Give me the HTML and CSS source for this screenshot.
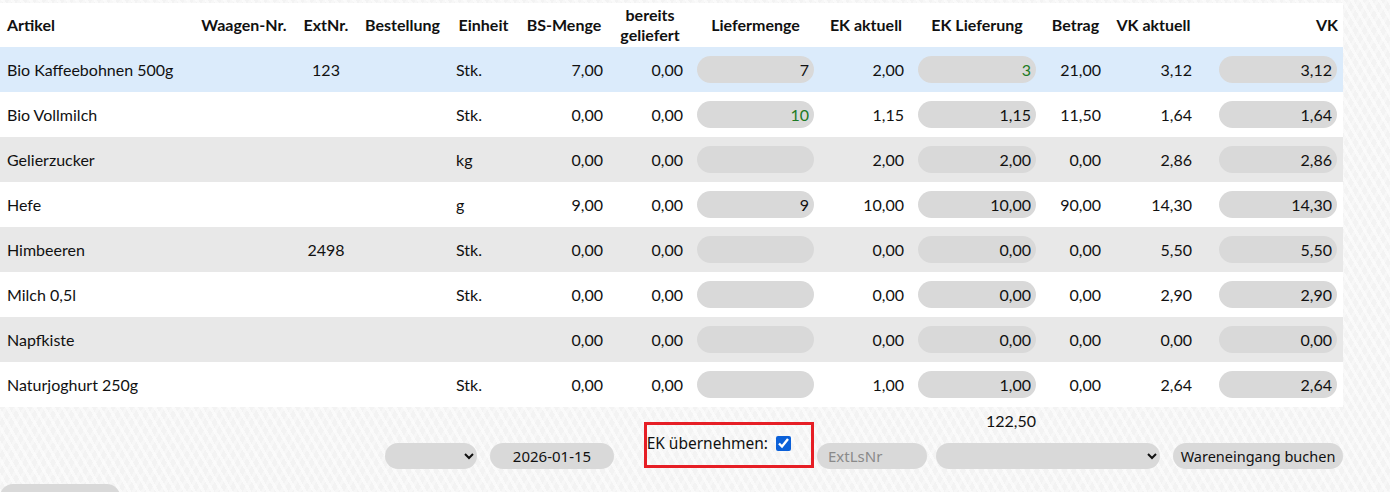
FILE: index.html
```html
<!DOCTYPE html>
<html lang="de">
<head>
<meta charset="utf-8">
<title>Wareneingang</title>
<link rel="stylesheet" href="styles.css">
</head>
<body>
<div class="page">
  <table class="grid">
    <colgroup>
      <col class="c-artikel"><col class="c-waage"><col class="c-ext"><col class="c-best"><col class="c-einh"><col class="c-bs"><col class="c-ber"><col class="c-lief"><col class="c-eka"><col class="c-ekl"><col class="c-betrag"><col class="c-vka"><col class="c-vk">
    </colgroup>
    <thead>
      <tr>
        <th class="left">Artikel</th>
        <th>Waagen-Nr.</th>
        <th>ExtNr.</th>
        <th>Bestellung</th>
        <th>Einheit</th>
        <th>BS-Menge</th>
        <th>bereits<br>geliefert</th>
        <th>Liefermenge</th>
        <th>EK aktuell</th>
        <th>EK Lieferung</th>
        <th>Betrag</th>
        <th>VK aktuell</th>
        <th class="right">VK</th>
      </tr>
    </thead>
    <tbody>
      <tr class="sel">
        <td>Bio Kaffeebohnen 500g</td><td></td><td class="ctr">123</td><td></td><td>Stk.</td>
        <td class="num">7,00</td><td class="num">0,00</td>
        <td class="inp"><input class="pill" value="7"></td>
        <td class="num">2,00</td>
        <td class="inp"><input class="pill green" value="3"></td>
        <td class="num">21,00</td><td class="num">3,12</td>
        <td class="inp vkc"><input class="pill" value="3,12"></td>
      </tr>
      <tr>
        <td>Bio Vollmilch</td><td></td><td></td><td></td><td>Stk.</td>
        <td class="num">0,00</td><td class="num">0,00</td>
        <td class="inp"><input class="pill green" value="10"></td>
        <td class="num">1,15</td>
        <td class="inp"><input class="pill" value="1,15"></td>
        <td class="num">11,50</td><td class="num">1,64</td>
        <td class="inp vkc"><input class="pill" value="1,64"></td>
      </tr>
      <tr class="alt">
        <td>Gelierzucker</td><td></td><td></td><td></td><td>kg</td>
        <td class="num">0,00</td><td class="num">0,00</td>
        <td class="inp"><input class="pill" value=""></td>
        <td class="num">2,00</td>
        <td class="inp"><input class="pill" value="2,00"></td>
        <td class="num">0,00</td><td class="num">2,86</td>
        <td class="inp vkc"><input class="pill" value="2,86"></td>
      </tr>
      <tr>
        <td>Hefe</td><td></td><td></td><td></td><td>g</td>
        <td class="num">9,00</td><td class="num">0,00</td>
        <td class="inp"><input class="pill" value="9"></td>
        <td class="num">10,00</td>
        <td class="inp"><input class="pill" value="10,00"></td>
        <td class="num">90,00</td><td class="num">14,30</td>
        <td class="inp vkc"><input class="pill" value="14,30"></td>
      </tr>
      <tr class="alt">
        <td>Himbeeren</td><td></td><td class="ctr">2498</td><td></td><td>Stk.</td>
        <td class="num">0,00</td><td class="num">0,00</td>
        <td class="inp"><input class="pill" value=""></td>
        <td class="num">0,00</td>
        <td class="inp"><input class="pill" value="0,00"></td>
        <td class="num">0,00</td><td class="num">5,50</td>
        <td class="inp vkc"><input class="pill" value="5,50"></td>
      </tr>
      <tr>
        <td>Milch 0,5l</td><td></td><td></td><td></td><td>Stk.</td>
        <td class="num">0,00</td><td class="num">0,00</td>
        <td class="inp"><input class="pill" value=""></td>
        <td class="num">0,00</td>
        <td class="inp"><input class="pill" value="0,00"></td>
        <td class="num">0,00</td><td class="num">2,90</td>
        <td class="inp vkc"><input class="pill" value="2,90"></td>
      </tr>
      <tr class="alt">
        <td>Napfkiste</td><td></td><td></td><td></td><td></td>
        <td class="num">0,00</td><td class="num">0,00</td>
        <td class="inp"><input class="pill" value=""></td>
        <td class="num">0,00</td>
        <td class="inp"><input class="pill" value="0,00"></td>
        <td class="num">0,00</td><td class="num">0,00</td>
        <td class="inp vkc"><input class="pill" value="0,00"></td>
      </tr>
      <tr>
        <td>Naturjoghurt 250g</td><td></td><td></td><td></td><td>Stk.</td>
        <td class="num">0,00</td><td class="num">0,00</td>
        <td class="inp"><input class="pill" value=""></td>
        <td class="num">1,00</td>
        <td class="inp"><input class="pill" value="1,00"></td>
        <td class="num">0,00</td><td class="num">2,64</td>
        <td class="inp vkc"><input class="pill" value="2,64"></td>
      </tr>
    </tbody>
    <tfoot>
      <tr>
        <td colspan="9"></td>
        <td class="num">122,50</td>
        <td colspan="3"></td>
      </tr>
    </tfoot>
  </table>

  <div class="controls">
    <select class="ctl sel-a"><option></option></select>
    <input class="ctl date" value="2026-01-15">
    <label class="ekbox">EK übernehmen: <input type="checkbox" checked></label>
    <input class="ctl extls" placeholder="ExtLsNr">
    <select class="ctl sel-b"><option></option></select>
    <button class="ctl btn">Wareneingang buchen</button>
  </div>
  <div class="bottom">
    <button class="ctl btn">Kfz abbuchen</button>
  </div>
</div>
</body>
</html>
```

FILE: styles.css
```css
html, body {
  margin: 0;
  padding: 0;
}
body {
  background-color: #f3f3f3;
  background-image:
    repeating-linear-gradient(60deg, rgba(255,255,255,0.55) 0 3px, transparent 3px 8px),
    repeating-linear-gradient(-60deg, rgba(255,255,255,0.35) 0 3px, transparent 3px 8px);
  font-family: "Lato", "Open Sans", sans-serif;
  color: #111;
  overflow: hidden;
}
.page {
  width: 1343px;
  padding-top: 3px;
}
.grid {
  width: 1343px;
  border-collapse: collapse;
  table-layout: fixed;
  font-size: 16px;
}
.c-artikel { width: 192px; }
.c-waage { width: 104px; }
.c-ext { width: 60px; }
.c-best { width: 93px; }
.c-einh { width: 69px; }
.c-bs { width: 92px; }
.c-ber { width: 80px; }
.c-lief { width: 131px; }
.c-eka { width: 90px; }
.c-ekl { width: 132px; }
.c-betrag { width: 65px; }
.c-vka { width: 91px; }
.c-vk { width: 144px; }

.grid thead tr {
  background: #fff;
  height: 44px;
}
.grid th {
  font-weight: 700;
  font-size: 16px;
  line-height: 20px;
  padding: 2px 5px;
  text-align: center;
  white-space: nowrap;
}
.grid th.left { text-align: left; padding-left: 7px; }
.grid th.right { text-align: right; padding-right: 5px; }

.grid tbody tr {
  height: 45px;
  background: #fff;
}
.grid tbody tr.alt { background: #e8e8e8; }
.grid tbody tr.sel { background: #dbebfb; }
.grid td {
  padding: 0 7px;
  white-space: nowrap;
  vertical-align: middle;
}
.grid td.num { text-align: right; }
.grid td.ctr { text-align: center; }
.grid td.inp { padding: 0 7px; }
.grid td.vkc { padding: 0 6px 0 20px; }

.pill {
  display: block;
  box-sizing: border-box;
  width: 100%;
  height: 27px;
  border: none;
  border-radius: 14px;
  background: #d9d9d9;
  text-align: right;
  padding: 0 5px 0 8px;
  font-family: "Lato", "Open Sans", sans-serif;
  font-size: 16px;
  color: #111;
  outline: none;
}
.pill.green { color: #1d7a23; }

.grid tfoot tr { height: 29px; }
.grid tfoot td { padding-top: 4px; vertical-align: top; }

.controls {
  display: flex;
  justify-content: flex-end;
  align-items: flex-end;
  margin-top: -14px;
  height: 47px;
}
.ctl {
  box-sizing: border-box;
  height: 26px;
  border: none;
  border-radius: 13px;
  background: #d9d9d9;
  font-family: "Noto Sans", "Open Sans", sans-serif;
  font-size: 15px;
  color: #111;
  margin-bottom: 0;
  white-space: nowrap;
}
.sel-a { width: 92px; }
.date { width: 124px; margin-left: 13px; text-align: center; padding: 0 8px; }
.ekbox {
  box-sizing: border-box;
  height: 46px;
  width: 170px;
  margin-left: 30px;
  margin-bottom: 1px;
  border: 3px solid #e61e25;
  display: flex;
  align-items: center;
  justify-content: flex-end;
  padding: 0 20px 4px 0;
  font-family: "Noto Sans", "Open Sans", sans-serif;
  font-size: 15.5px;
  white-space: nowrap;
  overflow: hidden;
}
.ekbox input {
  width: 15px;
  height: 15px;
  margin: 0 0 0 8px;
  flex: none;
  accent-color: #0b60d8;
}
.extls { width: 110px; margin-left: 3px; padding: 0 11px; color: #111; }
.extls::placeholder { color: #8a8a8a; }
.sel-b { width: 224px; margin-left: 9px; }
.btn { width: 170px; margin-left: 13px; padding: 0 2px; font-size: 14.5px; }

.bottom {
  margin-top: 15px;
}
.bottom .btn { width: 120px; margin-left: 0; padding-top: 0; }
```
